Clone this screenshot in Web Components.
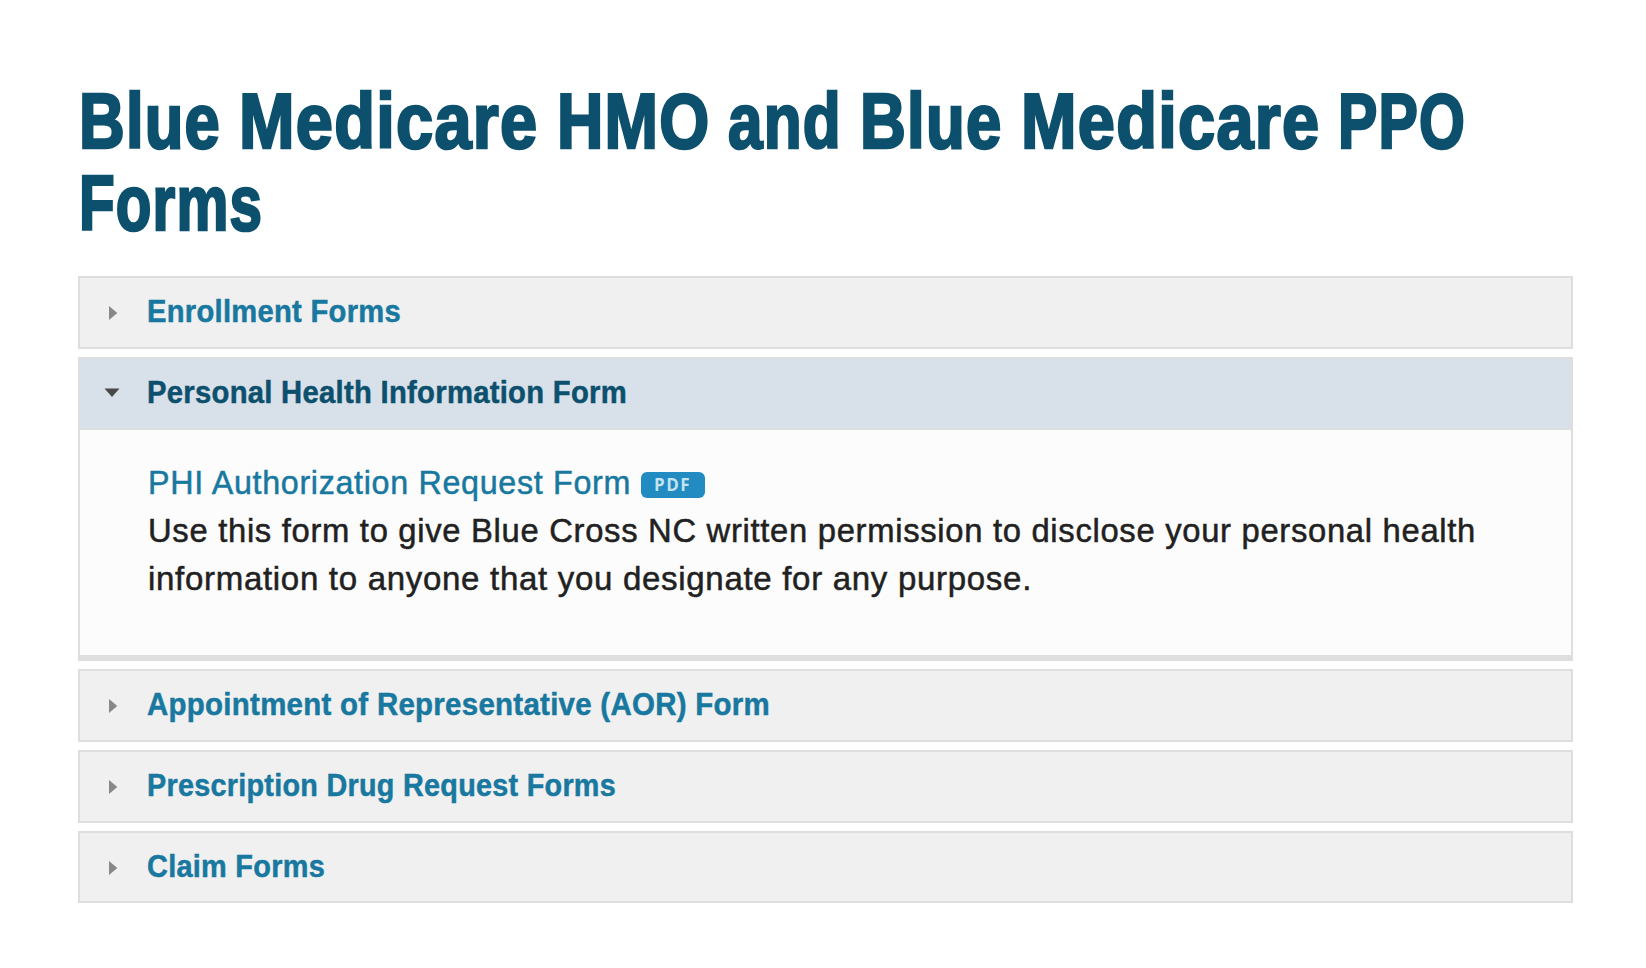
<!DOCTYPE html>
<html lang="en">
<head>
<meta charset="utf-8">
<title>Blue Medicare HMO and Blue Medicare PPO Forms</title>
<style>
body { margin: 0; background: #fff; }
</style>
</head>
<body>
<forms-page>
  <page-title slot="title">
    <fit-line width="142">Blue</fit-line>
    <fit-line width="299.5">Medicare</fit-line>
    <fit-line width="153.5">HMO</fit-line>
    <fit-line width="114">and</fit-line>
    <fit-line width="142.5">Blue</fit-line>
    <fit-line width="299.5">Medicare</fit-line>
    <fit-line width="128">PPO</fit-line>
    <fit-line width="184">Forms</fit-line>
  </page-title>
  <accordion-item><fit-line slot="heading" width="254">Enrollment Forms</fit-line></accordion-item>
  <accordion-item open>
    <fit-line slot="heading" width="480">Personal Health Information Form</fit-line>
    <form-entry>
      <fit-line slot="link" width="483">PHI Authorization Request Form</fit-line>
      <file-badge slot="badge">PDF</file-badge>
      <fit-line width="1328">Use this form to give Blue Cross NC written permission to disclose your personal health</fit-line>
      <fit-line width="884">information to anyone that you designate for any purpose.</fit-line>
    </form-entry>
  </accordion-item>
  <accordion-item><fit-line slot="heading" width="623">Appointment of Representative (AOR) Form</fit-line></accordion-item>
  <accordion-item><fit-line slot="heading" width="469">Prescription Drug Request Forms</fit-line></accordion-item>
  <accordion-item last><fit-line slot="heading" width="178">Claim Forms</fit-line></accordion-item>
</forms-page>
<script>
const define = (name, html, setup) => customElements.define(name, class extends HTMLElement {
  constructor() {
    super();
    this.attachShadow({ mode: "open" }).innerHTML = html;
  }
  connectedCallback() { if (setup) setup(this); }
});

define("forms-page", `
<style>
:host { display: flex; flex-direction: column; box-sizing: border-box; width: 1646px; height: 968px;
  padding: 80px 73px 0 78px; font-family: "Liberation Sans", Arial, sans-serif; overflow: hidden; }
.list { display: flex; flex-direction: column; gap: 8px; margin-top: 32px; }
</style>
<slot name="title"></slot>
<div class="list"><slot></slot></div>`);

define("page-title", `
<style>
:host { display: block; padding-left: 1px; color: #0c506d; }
h1 { display: flex; flex-wrap: wrap; column-gap: 18px; margin: 0; letter-spacing: 1.5px;
  font: 700 77.5px/82px "Liberation Sans", sans-serif; -webkit-text-stroke: 2.6px #0c506d; }
</style>
<h1><slot></slot></h1>`);

define("accordion-item", `
<style>
:host { display: flex; flex-direction: column; box-sizing: border-box; border: 2px solid #dedede; background: #f0f0f0; height: 73px; }
:host([last]) { height: 72px; }
:host([open]) { height: 304px; background: #fcfcfc; border-bottom-width: 6px; }
header { display: flex; align-items: center; box-sizing: border-box; height: 69px; flex: none; padding-left: 23px;
  font-size: 31px; font-weight: 700; line-height: 60px; color: #18789f; }
:host([open]) header { height: 71px; background: #d8e0e9; border-bottom: 2px solid #dedede; color: #0c506d; }
svg { flex: none; width: 18px; height: 18px; margin: 0 26px 0 0; fill: #888; }
.text { margin-bottom: 1px; letter-spacing: 0.3px; -webkit-text-stroke: 0.5px currentColor; }
.down { display: none; fill: #484848; margin-bottom: 1px; }
:host([open]) .right { display: none; }
:host([open]) .down { display: block; }
</style>
<header>
  <svg class="right" viewBox="0 0 18 18"><path d="M6 2 L14.3 9 L6 16 Z"/></svg>
  <svg class="down" viewBox="0 0 18 18"><path d="M1.5 4.5 H16.5 L9 13 Z"/></svg>
  <div class="text"><slot name="heading"></slot></div>
</header>
<slot></slot>`);

define("form-entry", `
<style>
:host { display: flex; flex-direction: column; align-items: flex-start; padding: 29px 0 0 68px;
  font-size: 33.5px; line-height: 48px; color: #212121; letter-spacing: 0.7px; -webkit-text-stroke: 0.5px currentColor; }
.row { display: flex; align-items: center; height: 48px; color: #18789f; }
</style>
<div class="row"><slot name="link"></slot><slot name="badge"></slot></div>
<slot></slot>`);

define("file-badge", `
<style>
:host { display: flex; align-items: center; justify-content: center; box-sizing: border-box; width: 64px; height: 26px;
  margin: 4px 0 0 10px; padding-right: 1px; border-radius: 6px; background: #228bc1; color: #c3e2f2;
  font: 700 17px/26px "Open Sans", sans-serif; letter-spacing: 1.5px; -webkit-text-stroke: 0; }
</style>
<slot></slot>`);

/* Text on one line whose glyphs are narrowed or widened to fill a given width. */
define("fit-line", `
<style>
:host { display: block; white-space: nowrap; }
span { display: inline-block; transform-origin: 0 50%; }
</style>
<span><slot></slot></span>`, el => {
  const span = el.shadowRoot.querySelector("span");
  const target = Number(el.getAttribute("width"));
  span.style.transform = "scaleX(" + target / span.getBoundingClientRect().width + ")";
  el.style.width = target + "px";
});
</script>
</body>
</html>
